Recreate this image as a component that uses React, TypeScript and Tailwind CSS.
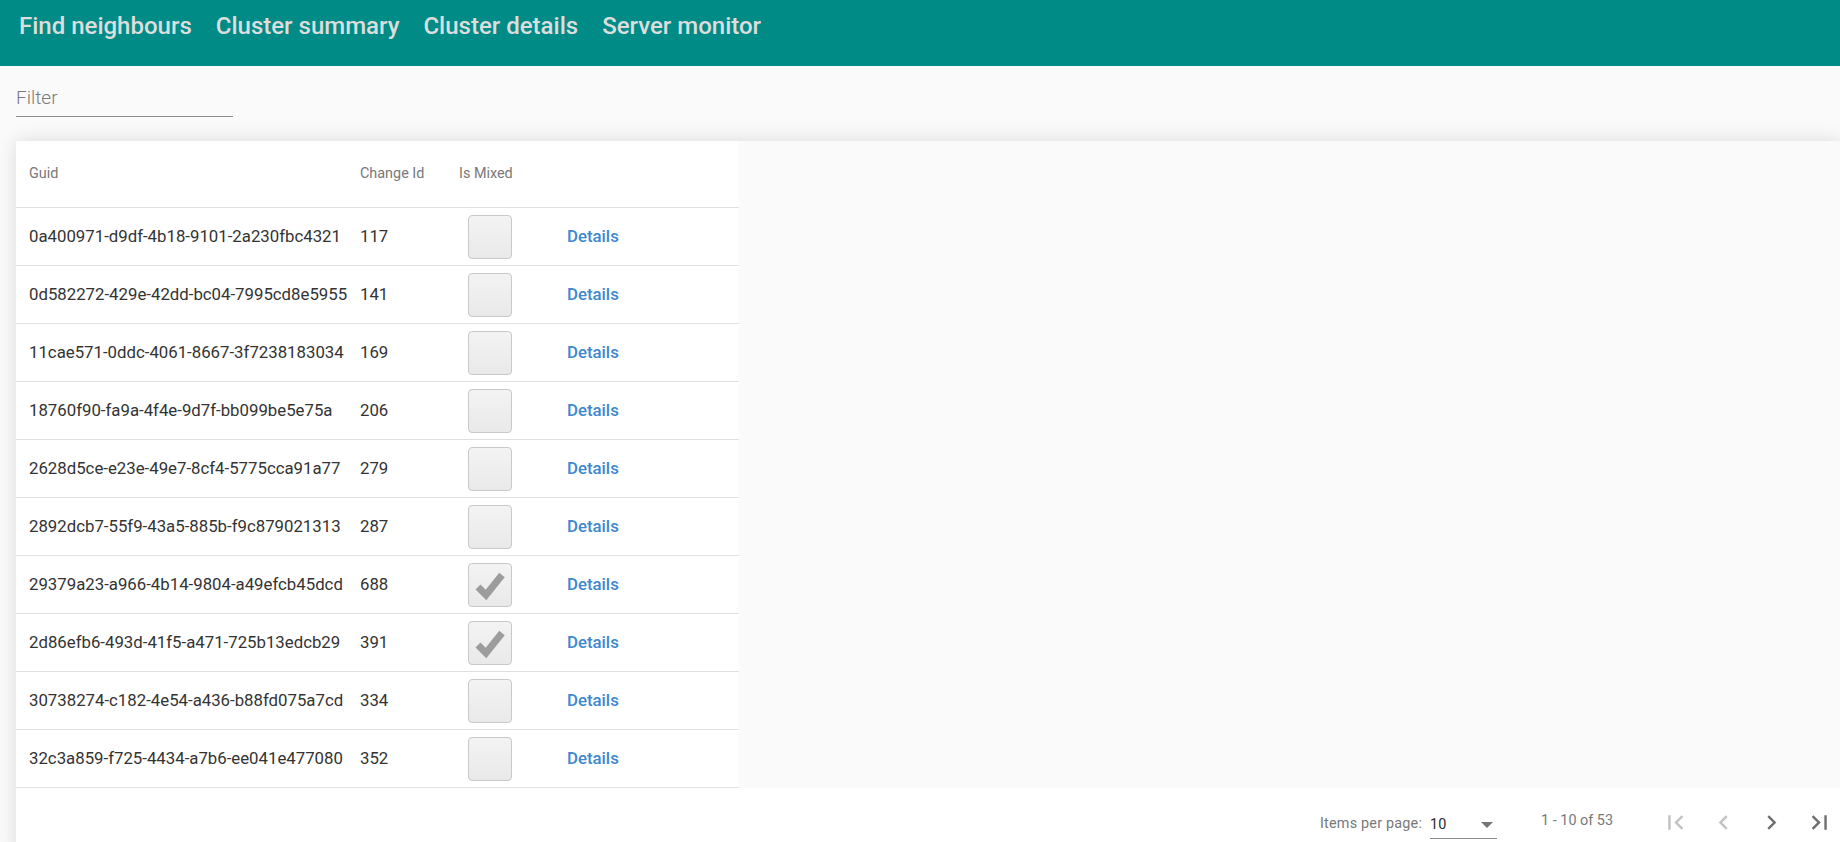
import React from "react";

const rows: { guid: string; change: string; mixed: boolean }[] = [
  { guid: "0a400971-d9df-4b18-9101-2a230fbc4321", change: "117", mixed: false },
  { guid: "0d582272-429e-42dd-bc04-7995cd8e5955", change: "141", mixed: false },
  { guid: "11cae571-0ddc-4061-8667-3f7238183034", change: "169", mixed: false },
  { guid: "18760f90-fa9a-4f4e-9d7f-bb099be5e75a", change: "206", mixed: false },
  { guid: "2628d5ce-e23e-49e7-8cf4-5775cca91a77", change: "279", mixed: false },
  { guid: "2892dcb7-55f9-43a5-885b-f9c879021313", change: "287", mixed: false },
  { guid: "29379a23-a966-4b14-9804-a49efcb45dcd", change: "688", mixed: true },
  { guid: "2d86efb6-493d-41f5-a471-725b13edcb29", change: "391", mixed: true },
  { guid: "30738274-c182-4e54-a436-b88fd075a7cd", change: "334", mixed: false },
  { guid: "32c3a859-f725-4434-a7b6-ee041e477080", change: "352", mixed: false },
];

function Checkbox({ checked }: { checked: boolean }) {
  return (
    <div className="w-[44px] h-[44px] rounded-[4px] border border-[#c9c9c9] bg-gradient-to-b from-[#f3f3f3] to-[#e9e9e9] flex items-center justify-center">
      {checked && (
        <svg width="40" height="40" viewBox="0 0 40 40">
          <path d="M8 22 L16 30 L32 10" fill="none" stroke="#9c9c9c" strokeWidth="7" strokeLinejoin="miter" />
        </svg>
      )}
    </div>
  );
}

function Icon({ d, color }: { d: string; color: string }) {
  return (
    <div className="w-[48px] h-[48px] flex items-center justify-center">
      <svg width="29" height="29" viewBox="0 0 24 24">
        <path d={d} fill={color} />
      </svg>
    </div>
  );
}

export default function App() {
  return (
    <div className="min-h-screen bg-[#fafafa] font-['Roboto',sans-serif] overflow-hidden">
      <header className="h-[66px] bg-[#008b87] flex items-start pl-[19px] pt-[12px] gap-[24px]">
        {["Find neighbours", "Cluster summary", "Cluster details", "Server monitor"].map((t) => (
          <span key={t} className="text-[24px] leading-[28px] font-medium text-[#dddddd]">
            {t}
          </span>
        ))}
      </header>

      <div className="ml-4 mt-[19px] w-[217px] h-[32px] border-b border-[#8c8c8c] flex items-start">
        <span className="text-[19px] leading-[26px] font-light text-[#7a7a7a]">Filter</span>
      </div>

      <div className="ml-4 mt-[24px] bg-[#fafafa] shadow-[0_0_18px_rgba(0,0,0,0.13)]">
        <div className="w-[723px] bg-white">
          <div className="h-[67px] flex items-center border-b border-[#e0e0e0] pl-[13px] text-[14.4px] text-[#787878]">
            <div className="w-[331px]">Guid</div>
            <div className="w-[99px]">Change Id</div>
            <div className="w-[108px]">Is Mixed</div>
            <div className="flex-1"></div>
          </div>
          {rows.map((r) => (
            <div key={r.guid} className="h-[58px] flex items-center border-b border-[#e0e0e0] pl-[13px] text-[16.8px] text-[#333333]">
              <div className="w-[331px] whitespace-nowrap">{r.guid}</div>
              <div className="w-[99px]">{r.change}</div>
              <div className="w-[108px] pl-[9px]">
                <Checkbox checked={r.mixed} />
              </div>
              <div className="flex-1 font-medium text-[#3d88cf]">Details</div>
            </div>
          ))}
        </div>
        <div className="h-[67px] bg-white flex items-center justify-end text-[14.4px] text-[#787878] pt-[5px] -mr-[3px]">
          <span className="tracking-[0.2px]">Items per page:</span>
          <div className="ml-[8px] w-[67px] h-[30px] border-b border-[#8c8c8c] flex items-center justify-between text-[#2a2a2a] pt-[2px]">
            <span>10</span>
            <svg width="12" height="6" viewBox="0 0 12 6" className="mr-[4px]">
              <path d="M0 0 L12 0 L6 6 Z" fill="#757575" />
            </svg>
          </div>
          <span className="ml-[44px] mr-[38px] -mt-[6px]">1 - 10 of 53</span>
          <div className="flex items-center -mt-[3px]">
            <Icon d="M18.41 16.59L13.82 12l4.59-4.59L17 6l-6 6 6 6zM6 6h2v12H6z" color="#c2c2c2" />
            <Icon d="M15.41 7.41L14 6l-6 6 6 6 1.41-1.41L10.83 12z" color="#c2c2c2" />
            <Icon d="M10 6L8.59 7.41 13.17 12l-4.58 4.59L10 18l6-6z" color="#6f6f6f" />
            <Icon d="M5.59 7.41L10.18 12l-4.59 4.59L7 18l6-6-6-6zM16 6h2v12h-2z" color="#6f6f6f" />
          </div>
        </div>
      </div>
    </div>
  );
}
